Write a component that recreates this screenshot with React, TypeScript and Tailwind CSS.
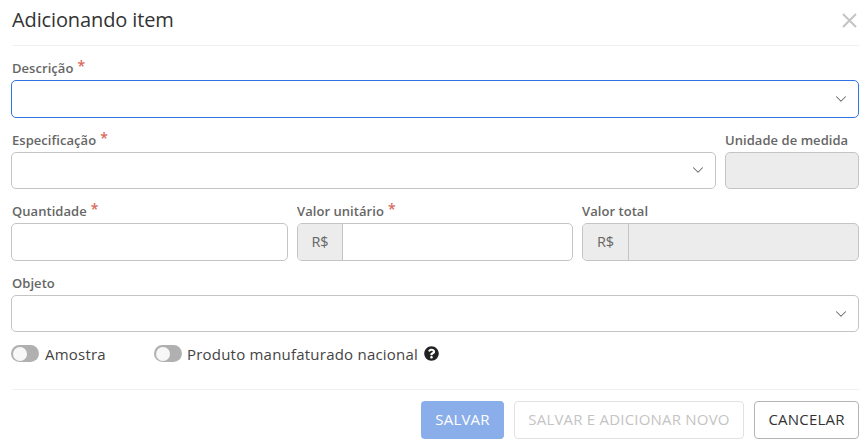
import React from 'react';
import { ChevronDown } from 'lucide-react';

function Label({ text, required, inset }: { text: string; required?: boolean; inset?: boolean }) {
  return (
    <div className={`h-[22px] ${inset ? 'pl-[1px]' : ''} flex items-start text-[13px] leading-[20px] tracking-[0.05px] font-semibold text-[#666666] whitespace-nowrap`}>
      {text}
      {required && <span className="ml-[4px] mt-[1px] text-[14px] leading-[14px] text-[#d9695c]">*</span>}
    </div>
  );
}

function SelectBox({ focused }: { focused?: boolean }) {
  return (
    <div className={`h-[37.5px] rounded-[5px] bg-white flex items-center justify-end pr-[8px] border ${focused ? 'border-[#2f74e0]' : 'border-[#c4c4c4]'}`}>
      <ChevronDown size={18} strokeWidth={1.4} className="text-[#666666]" />
    </div>
  );
}

function MoneyInput({ disabled }: { disabled?: boolean }) {
  return (
    <div className={`h-[37.5px] rounded-[5px] border border-[#c4c4c4] flex overflow-hidden ${disabled ? 'bg-[#ececec]' : 'bg-white'}`}>
      <div className={`${disabled ? 'w-[46px]' : 'w-[45px]'} shrink-0 bg-[#ececec] border-r border-[#c4c4c4] flex items-center justify-center text-[14.5px] text-[#666666]`}>
        R$
      </div>
    </div>
  );
}

function Toggle({ label, inset }: { label: string; inset?: boolean }) {
  return (
    <div className="flex items-center gap-[5px]">
      <div className="w-[28px] h-[17px] rounded-full bg-[#b0b0b0] flex items-center pl-[2px]">
        <div className="w-[14px] h-[14px] rounded-full bg-[#f7f7f7]" />
      </div>
      <span className={`${inset ? 'pl-[1px]' : ''} text-[15px] tracking-[0.22px] text-[#444444] whitespace-nowrap`}>{label}</span>
    </div>
  );
}

export default function App() {
  return (
    <div className="w-[868px] h-[444px] bg-white pl-[11px] pr-[9px] overflow-hidden" style={{ fontFamily: "'Open Sans', sans-serif" }}>
      <div className="h-[46px] ml-[1px] border-b border-[#f0f0f0] flex items-center justify-between">
        <h1 className="text-[20px] leading-[28px] pb-[5px] tracking-[-0.12px] text-[#333333]">Adicionando item</h1>
        <svg width="15" height="15" viewBox="0 0 15 15" stroke="#c4c4c4" strokeWidth="2" className="mb-[4px] mr-[2px]">
          <path d="M1 1 L14 14 M14 1 L1 14" />
        </svg>
      </div>

      <div className="mt-[12px]">
        <Label text="Descrição" required inset />
        <SelectBox focused />
      </div>

      <div className="mt-[12.17px] flex gap-[9px]">
        <div className="flex-1">
          <Label text="Especificação" required inset />
          <SelectBox />
        </div>
        <div className="w-[134px]">
          <Label text="Unidade de medida" />
          <div className="h-[37.5px] rounded-[5px] border border-[#c4c4c4] bg-[#ececec]" />
        </div>
      </div>

      <div className="mt-[12.17px] grid grid-cols-[277px_276px_277px] gap-[9px]">
        <div>
          <Label text="Quantidade" required inset />
          <div className="h-[37.5px] rounded-[5px] border border-[#c4c4c4] bg-white" />
        </div>
        <div>
          <Label text="Valor unitário" required />
          <MoneyInput />
        </div>
        <div>
          <Label text="Valor total" />
          <MoneyInput disabled />
        </div>
      </div>

      <div className="mt-[12.17px]">
        <Label text="Objeto" inset />
        <SelectBox />
      </div>

      <div className="mt-[13px] h-[17px] flex items-center gap-[48px]">
        <Toggle label="Amostra" inset />
        <div className="flex items-center gap-[6px]">
          <Toggle label="Produto manufaturado nacional" />
          <svg width="15" height="15" viewBox="0 0 512 512" fill="#222222" className="-mt-[1px]">
            <path d="M504 256c0 137-111 248-248 248S8 393 8 256C8 119 119 8 256 8s248 111 248 248zM262.700 90c-54.500 0-89.300 23-116.500 63.800-3.500 5.300-2.400 12.400 2.700 16.300l34.700 26.300c5.200 3.900 12.600 3 16.700-2.100 17.900-22.700 30.100-35.800 57.300-35.800 20.400 0 45.700 13.100 45.700 32.900 0 14.900-12.300 22.600-32.400 33.900C247.100 238.500 216 254.900 216 296v4c0 6.600 5.400 12 12 12h56c6.600 0 12-5.400 12-12v-1.300c0-28.500 83.200-29.700 83.200-106.700 0-58-60.200-102-116.500-102zM256 338c-25.400 0-46 20.600-46 46 0 25.400 20.600 46 46 46s46-20.600 46-46c0-25.400-20.600-46-46-46z" />
          </svg>
        </div>
      </div>

      <div className="mt-[26.5px] ml-[1px] pt-[11px] border-t border-[#f0f0f0] flex justify-end gap-[10px] text-[15px] tracking-[0.2px]">
        <div className="w-[83px] h-[38px] pb-[1px] rounded-[4px] bg-[#8aaeea] text-white font-medium flex items-center justify-center">SALVAR</div>
        <div className="w-[230px] h-[38px] pb-[1px] rounded-[4px] border border-[#e2e2e2] text-[#c4c4c4] flex items-center justify-center">SALVAR E ADICIONAR NOVO</div>
        <div className="w-[105px] h-[38px] pb-[1px] rounded-[4px] border border-[#b5b5b5] text-[#333333] flex items-center justify-center">CANCELAR</div>
      </div>
    </div>
  );
}
